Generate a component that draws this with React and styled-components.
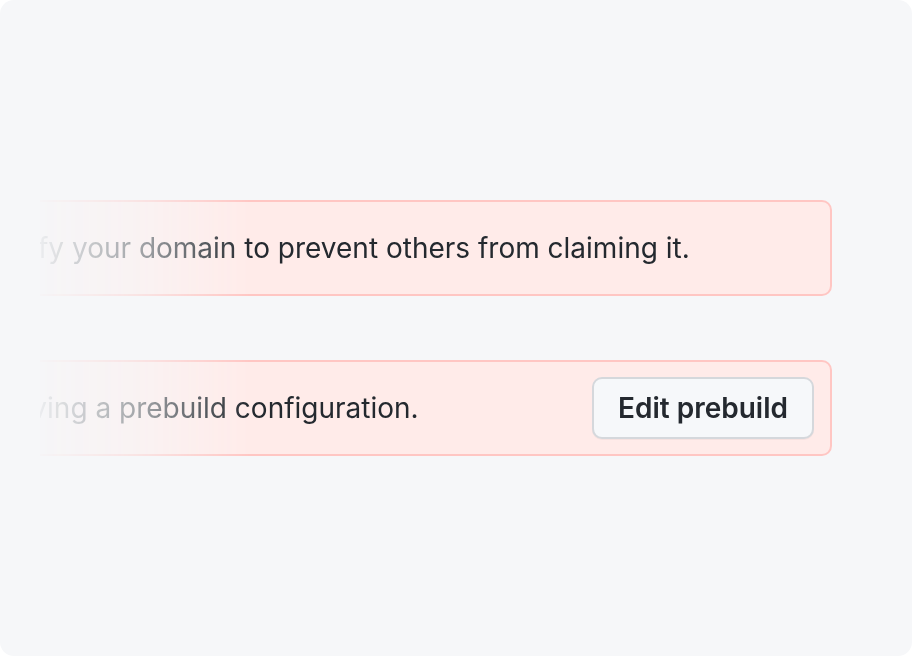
import React from "react";
import styled, { createGlobalStyle } from "styled-components";

const GlobalStyle = createGlobalStyle`
  html, body {
    margin: 0;
    padding: 0;
    background: #ffffff;
  }
  body {
    font-family: Inter, "Noto Sans", "Liberation Sans", sans-serif;
    -webkit-font-smoothing: antialiased;
  }
`;

const Card = styled.div`
  width: 912px;
  height: 656px;
  box-sizing: border-box;
  background: #f6f7f9;
  border-radius: 14px;
  padding: 200px 80px 0 40px;
  overflow: hidden;
`;

const FadeArea = styled.div`
  display: flex;
  flex-direction: column;
  gap: 64px;
  overflow: hidden;
  -webkit-mask-image: linear-gradient(to right, rgba(0, 0, 0, 0.05) 0px, rgba(0, 0, 0, 0.4) 100px, #000 210px);
  mask-image: linear-gradient(to right, rgba(0, 0, 0, 0.05) 0px, rgba(0, 0, 0, 0.4) 100px, #000 210px);
`;

const Banner = styled.div`
  display: flex;
  align-items: center;
  justify-content: space-between;
  height: 96px;
  box-sizing: border-box;
  margin-left: ${(p) => p.shift}px;
  padding: 0 16px 0 24px;
  background: #ffebe9;
  border: 2px solid #ffc6c3;
  border-radius: 10px;
`;

const Message = styled.span`
  font-size: 28px;
  line-height: 36px;
  color: #24292f;
  white-space: nowrap;
`;

const Button = styled.button`
  height: 62px;
  padding: 0 24px;
  font-family: inherit;
  font-size: 28px;
  font-weight: 600;
  color: #24292f;
  background: #f6f8fa;
  border: 2px solid #d5d8dc;
  border-radius: 10px;
  box-shadow: 0 1px 0 rgba(27, 31, 36, 0.04);
`;

export default function App() {
  return (
    <>
      <GlobalStyle />
      <Card>
        <FadeArea>
          <Banner shift={-80}>
            <Message>Verify your domain to prevent others from claiming it.</Message>
          </Banner>
          <Banner shift={-192}>
            <Message>Consider saving a prebuild configuration.</Message>
            <Button>Edit prebuild</Button>
          </Banner>
        </FadeArea>
      </Card>
    </>
  );
}
